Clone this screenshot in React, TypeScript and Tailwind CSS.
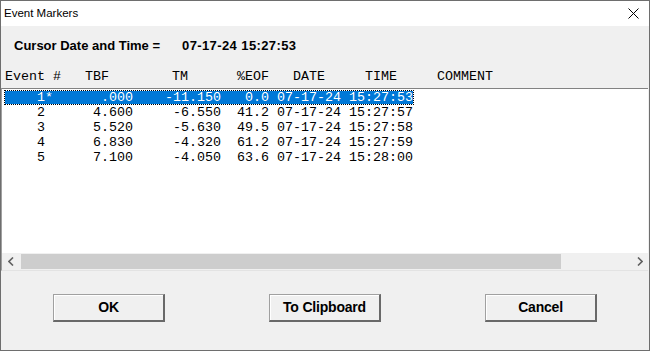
import React from "react";

const rows = [
  { n: "1", star: true, tbf: ".000", tm: "-11.150", eof: "0.0", date: "07-17-24", time: "15:27:53" },
  { n: "2", star: false, tbf: "4.600", tm: "-6.550", eof: "41.2", date: "07-17-24", time: "15:27:57" },
  { n: "3", star: false, tbf: "5.520", tm: "-5.630", eof: "49.5", date: "07-17-24", time: "15:27:58" },
  { n: "4", star: false, tbf: "6.830", tm: "-4.320", eof: "61.2", date: "07-17-24", time: "15:27:59" },
  { n: "5", star: false, tbf: "7.100", tm: "-4.050", eof: "63.6", date: "07-17-24", time: "15:28:00" },
];

const line = (r: (typeof rows)[number]) =>
  "    " +
  r.n +
  (r.star ? "*" : " ") +
  r.tbf.padStart(10) +
  r.tm.padStart(11) +
  r.eof.padStart(6) +
  " " +
  r.date +
  " " +
  r.time;

const mono = { fontFamily: '"Liberation Mono", "Courier New", monospace' };
const sans = { fontFamily: '"Liberation Sans", Arial, sans-serif' };

function Btn({ label }: { label: string }) {
  return (
    <div className="w-[112px] h-[28px] box-border border-t border-l border-r-2 border-b-2 border-t-[#a0a0a0] border-l-[#a0a0a0] border-r-[#696969] border-b-[#696969] bg-[#f0f0f0] shadow-[inset_1px_1px_0_#ffffff] flex items-center justify-center">
      <span className="text-[14px] font-bold text-black tracking-[-0.2px]" style={sans}>
        {label}
      </span>
    </div>
  );
}

export default function App() {
  return (
    <div className="w-[650px] h-[357px] bg-white overflow-hidden">
      <div className="w-[650px] h-[351px] box-border border border-[#6e6e6e] bg-[#f0f0f0] flex flex-col">
        {/* Title bar */}
        <div className="h-[25px] bg-white flex items-center justify-between pl-[3px] pr-[10px] shrink-0">
          <span className="text-[11.5px] text-black" style={sans}>
            Event Markers
          </span>
          <svg width="11" height="11" viewBox="0 0 11 11">
            <path d="M0.5 0.5 L10.5 10.5 M10.5 0.5 L0.5 10.5" stroke="#000" strokeWidth="1" />
          </svg>
        </div>

        {/* Cursor line */}
        <div
          className="h-[40px] flex items-center pl-[13px] text-[13px] font-bold text-black shrink-0"
          style={sans}
        >
          <span className="w-[168px]">Cursor Date and Time =</span>
          <span className="tracking-[0.4px]">07-17-24 15:27:53</span>
        </div>

        {/* Header */}
        <div className="h-[22px] flex items-center pl-[4px] text-[13.33px] text-black whitespace-pre shrink-0" style={mono}>
          <span className="w-[80px]">Event #</span>
          <span className="w-[87px]">TBF</span>
          <span className="w-[65px]">TM</span>
          <span className="w-[56px]">%EOF</span>
          <span className="w-[72px]">DATE</span>
          <span className="w-[72px]">TIME</span>
          <span>COMMENT</span>
        </div>

        {/* List box */}
        <div className="h-[183px] mr-[1px] box-border border-t border-l border-t-[#828282] border-l-[#a0a0a0] border-b border-b-[#e3e3e3] bg-white flex flex-col shrink-0">
          <div className="flex-1 pt-[1px] pl-[2px]">
            {rows.map((r, i) => (
              <div
                key={i}
                className={
                  i === 0
                    ? "w-[410px] h-[15px] box-border border border-dotted border-black bg-white"
                    : "w-[410px] h-[15px] box-border border border-transparent"
                }
              >
                <div
                  className={
                    i === 0
                      ? "h-full bg-[#0078d7] text-white text-[13.33px] leading-[13px] whitespace-pre"
                      : "h-full text-black text-[13.33px] leading-[13px] whitespace-pre"
                  }
                  style={mono}
                >
                  {line(r)}
                </div>
              </div>
            ))}
          </div>
          {/* Horizontal scrollbar */}
          <div className="h-[17px] bg-[#f0f0f0] flex items-center shrink-0">
            <div className="w-[17px] h-[17px] flex items-center justify-center">
              <svg width="6" height="9" viewBox="0 0 6 9">
                <path d="M5 0.5 L1 4.5 L5 8.5" fill="none" stroke="#606060" strokeWidth="1.6" />
              </svg>
            </div>
            <div className="flex-1 h-[15px] flex items-center">
              <div className="w-[540px] h-[15px] ml-[2px] bg-[#cdcdcd]" />
            </div>
            <div className="w-[17px] h-[17px] flex items-center justify-center">
              <svg width="6" height="9" viewBox="0 0 6 9">
                <path d="M1 0.5 L5 4.5 L1 8.5" fill="none" stroke="#606060" strokeWidth="1.6" />
              </svg>
            </div>
          </div>
        </div>

        {/* Buttons */}
        <div className="flex pl-[52px] gap-[104px] pt-[23px]">
          <Btn label="OK" />
          <Btn label="To Clipboard" />
          <Btn label="Cancel" />
        </div>
      </div>
    </div>
  );
}
